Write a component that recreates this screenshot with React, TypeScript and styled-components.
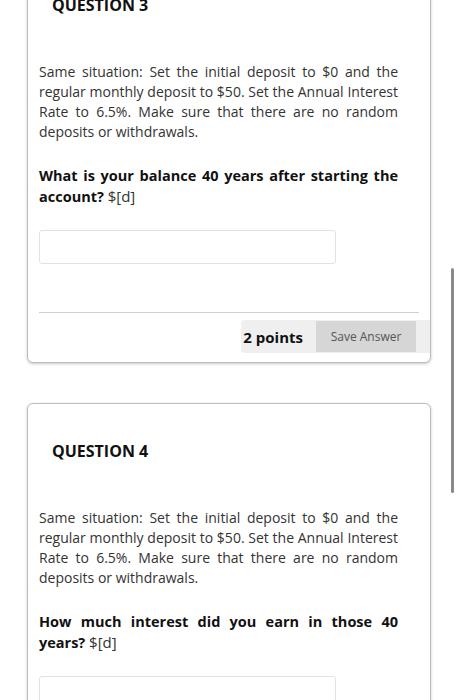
import styled, { createGlobalStyle } from "styled-components";

const GlobalStyle = createGlobalStyle`
  html, body {
    margin: 0;
    padding: 0;
    background: #fff;
    overflow: hidden;
  }
  body {
    font-family: "Open Sans", "Liberation Sans", sans-serif;
    color: #333;
  }
`;

type Question = {
  number: number
  text: string
  prompt: string
  hint: string
}

const questions: Question[] = [
  {
    number: 3,
    text: "Same situation: Set the initial deposit to $0 and the regular monthly deposit to $50. Set the Annual Interest Rate to 6.5%. Make sure that there are no random deposits or withdrawals.",
    prompt: "What is your balance 40 years after starting the account?",
    hint: "$[d]",
  },
  {
    number: 4,
    text: "Same situation: Set the initial deposit to $0 and the regular monthly deposit to $50. Set the Annual Interest Rate to 6.5%. Make sure that there are no random deposits or withdrawals.",
    prompt: "How much interest did you earn in those 40 years?",
    hint: "$[d]",
  },
];

const Page = styled.div`
  display: flex;
  flex-direction: column;
  gap: 40px;
  margin-top: -43px;
  padding-left: 27px;
  width: 404px;
`;

const Card = styled.section`
  background: #fff;
  border: 1px solid #bcbcbc;
  border-radius: 6px;
  box-shadow: 0 1px 3px rgba(0, 0, 0, 0.22);
  padding: 36px 0 9px 11px;
`;

const Heading = styled.h3`
  margin: 0 0 46px 13px;
  font-size: 16px;
  line-height: 22px;
  font-weight: 700;
  color: #111;
`;

const Body = styled.p`
  margin: 0 32px 24px 0;
  font-size: 14px;
  line-height: 20px;
  text-align: justify;
  color: #333;
`;

const Prompt = styled.p`
  margin: 0 32px 23px 0;
  font-size: 14.5px;
  line-height: 20px;
  text-align: justify;
  font-weight: 700;
  color: #111;
`;

const Hint = styled.span`
  font-size: 15px;
  font-weight: 400;
  color: #333;
`;

const AnswerInput = styled.input`
  display: block;
  box-sizing: border-box;
  width: 297px;
  height: 34px;
  margin: 0 0 48px 0;
  border: 1px solid #e2e2e2;
  border-radius: 3px;
  background: #fff;
  outline: none;
`;

const Divider = styled.hr`
  margin: 0 11px 7px 0;
  border: none;
  border-top: 1px solid #cfcfcf;
`;

const Footer = styled.div`
  display: flex;
  justify-content: flex-end;
`;

const FooterBar = styled.div`
  display: flex;
  align-items: center;
  gap: 13px;
  background: #efefef;
  border-radius: 4px 0 0 4px;
  padding: 1px 14px 1px 2px;
`;

const Points = styled.span`
  font-size: 15px;
  font-weight: 700;
  color: #111;
`;

const SaveButton = styled.button`
  width: 100px;
  height: 31px;
  border: none;
  background: #d6d6d6;
  color: #555;
  font-family: "Open Sans", "Liberation Sans", sans-serif;
  font-size: 12px;
  padding: 0;
`;

const ScrollThumb = styled.div`
  position: fixed;
  left: 451px;
  top: 268px;
  width: 3px;
  height: 225px;
  border-radius: 2px;
  background: #8a8a8a;
`;

function QuestionCard({ q }: { q: Question }) {
  return (
    <Card>
      <Heading>QUESTION {q.number}</Heading>
      <Body>{q.text}</Body>
      <Prompt>
        {q.prompt} <Hint>{q.hint}</Hint>
      </Prompt>
      <AnswerInput type="text" />
      <Divider />
      <Footer>
        <FooterBar>
          <Points>2 points</Points>
          <SaveButton>Save Answer</SaveButton>
        </FooterBar>
      </Footer>
    </Card>
  );
}

export default function App() {
  return (
    <>
      <GlobalStyle />
      <Page>
        {questions.map((q) => (
          <QuestionCard key={q.number} q={q} />
        ))}
      </Page>
      <ScrollThumb />
    </>
  );
}
